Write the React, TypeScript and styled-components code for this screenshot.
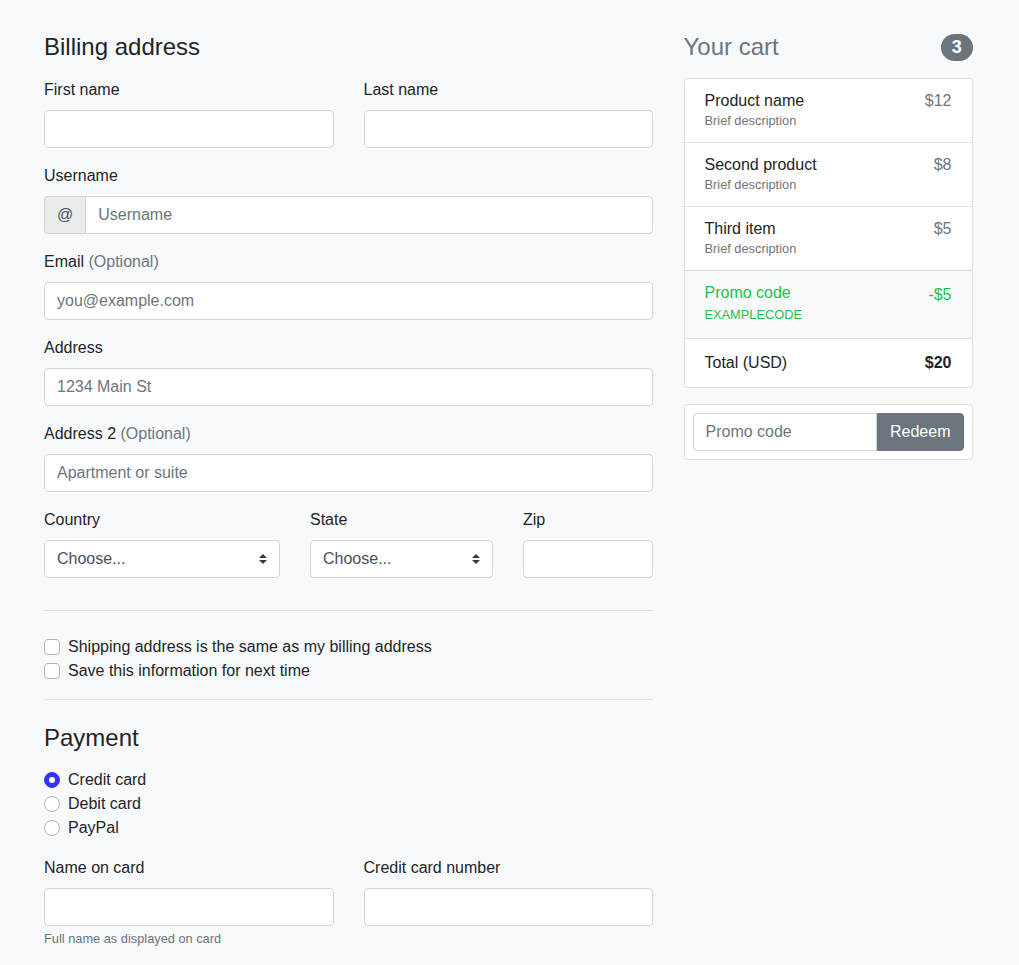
import styled, { createGlobalStyle } from 'styled-components';

const GlobalStyle = createGlobalStyle`
  * { box-sizing: border-box; }
  body {
    margin: 0;
    background: #f8f9fa;
    color: #212529;
    font-family: "Liberation Sans", Arial, sans-serif;
    font-size: 16px;
    line-height: 1.5;
  }
`;

const Container = styled.div`
  padding: 33px 0 40px 44px;
  display: flex;
  gap: 30.5px;
`;

const Main = styled.div`
  flex: 0 0 609px;
`;

const Side = styled.div`
  flex: 0 0 289px;
`;

const H4 = styled.h4<{ $muted?: boolean }>`
  margin: 0 0 16px;
  font-size: 24px;
  font-weight: 500;
  line-height: 1.2;
  color: ${(p) => (p.$muted ? '#6c757d' : '#212529')};
`;

const CartHead = styled(H4)`
  display: flex;
  justify-content: space-between;
  align-items: center;
`;

const Badge = styled.span`
  display: inline-block;
  background: #6c757d;
  color: #fff;
  font-size: 18px;
  font-weight: 700;
  line-height: 1;
  padding: 4.5px 10.8px;
  border-radius: 10rem;
`;

const Row = styled.div<{ $cols: string }>`
  display: grid;
  grid-template-columns: ${(p) => p.$cols};
  column-gap: 30px;
`;

const Field = styled.div`
  margin-bottom: 16px;
`;

const Label = styled.label`
  display: block;
  margin-bottom: 8px;
`;

const Muted = styled.span`
  color: #6c757d;
`;

const Input = styled.input`
  display: block;
  width: 100%;
  height: 38px;
  padding: 6px 12px;
  font: inherit;
  color: #495057;
  background: #fff;
  border: 1px solid #ced4da;
  border-radius: 4px;
  outline: none;
  &::placeholder {
    color: #6c757d;
  }
`;

const Group = styled.div`
  display: flex;
  width: 100%;
`;

const GroupText = styled.span`
  display: flex;
  align-items: center;
  padding: 6px 12px;
  background: #e9ecef;
  color: #495057;
  border: 1px solid #ced4da;
  border-right: 0;
  border-radius: 4px 0 0 4px;
`;

const GroupInput = styled(Input)`
  flex: 1;
  min-width: 0;
  border-radius: 0 4px 4px 0;
`;

const PromoInput = styled(Input)`
  flex: 1;
  min-width: 0;
  border-radius: 4px 0 0 4px;
`;

const Select = styled.select`
  display: block;
  width: 100%;
  height: 38px;
  padding: 6px 28px 6px 12px;
  font: inherit;
  color: #495057;
  background: #fff
    url("data:image/svg+xml,%3csvg xmlns='http://www.w3.org/2000/svg' width='4' height='5' viewBox='0 0 4 5'%3e%3cpath fill='%23343a40' d='M2 0L0 2h4zm0 5L0 3h4z'/%3e%3c/svg%3e")
    no-repeat right 12px center / 8px 10px;
  border: 1px solid #ced4da;
  border-radius: 4px;
  appearance: none;
  outline: none;
`;

const Rule = styled.hr<{ $after: number }>`
  margin: 16px 0 ${(p) => p.$after}px;
  border: 0;
  border-top: 1px solid rgba(0, 0, 0, 0.1);
`;

const Check = styled.label`
  display: flex;
  align-items: center;
  gap: 8px;
  min-height: 24px;
`;

const Box = styled.span<{ $round?: boolean; $on?: boolean }>`
  width: 16px;
  height: 16px;
  flex: 0 0 16px;
  border-radius: ${(p) => (p.$round ? '50%' : '4px')};
  border: 1px solid ${(p) => (p.$on ? '#3433f5' : '#adb5bd')};
  background: ${(p) => (p.$on ? '#3433f5' : '#fff')};
  display: flex;
  align-items: center;
  justify-content: center;
  &::after {
    content: '';
    display: ${(p) => (p.$on ? 'block' : 'none')};
    width: 6px;
    height: 6px;
    border-radius: 50%;
    background: #fff;
  }
`;

const PaymentHead = styled(H4)`
  margin-bottom: 15px;
`;

const Radios = styled.div`
  margin: 15px 0 16px;
`;

const Help = styled.small`
  display: block;
  margin-top: 3px;
  font-size: 12.8px;
  color: #6c757d;
`;

const List = styled.ul`
  margin: 0 0 16px;
  padding: 0;
  list-style: none;
  background: #fff;
  border: 1px solid rgba(0, 0, 0, 0.125);
  border-radius: 4px;
`;

const Item = styled.li<{ $condensed?: boolean; $light?: boolean; $green?: boolean }>`
  display: flex;
  justify-content: space-between;
  padding: 12px 20px;
  line-height: ${(p) => (p.$condensed ? 1.25 : 1.5)};
  background: ${(p) => (p.$light ? '#f8f9fa' : 'transparent')};
  color: ${(p) => (p.$green ? '#1cc24c' : 'inherit')};
  & + & {
    border-top: 1px solid rgba(0, 0, 0, 0.125);
  }
`;

const ItemTitle = styled.h6`
  margin: 0;
  font-size: 16px;
  font-weight: 500;
  line-height: 19px;
`;

const ItemSmall = styled.small<{ $muted?: boolean }>`
  font-size: 12.8px;
  color: ${(p) => (p.$muted ? '#6c757d' : 'inherit')};
`;

const Price = styled.span<{ $muted?: boolean }>`
  color: ${(p) => (p.$muted ? '#6c757d' : 'inherit')};
`;

const Card = styled.div`
  padding: 8px;
  background: #fff;
  border: 1px solid rgba(0, 0, 0, 0.125);
  border-radius: 4px;
`;

const Button = styled.button`
  padding: 6px 12px;
  font: inherit;
  color: #fff;
  background: #6c757d;
  border: 1px solid #6c757d;
  border-radius: 0 4px 4px 0;
`;

const products = [
  { name: 'Product name', price: '$12' },
  { name: 'Second product', price: '$8' },
  { name: 'Third item', price: '$5' },
];

export default function App() {
  return (
    <>
      <GlobalStyle />
      <Container>
        <Main>
          <H4>Billing address</H4>
          <Row $cols="1fr 1fr">
            <Field>
              <Label>First name</Label>
              <Input />
            </Field>
            <Field>
              <Label>Last name</Label>
              <Input />
            </Field>
          </Row>
          <Field>
            <Label>Username</Label>
            <Group>
              <GroupText>@</GroupText>
              <GroupInput placeholder="Username" />
            </Group>
          </Field>
          <Field>
            <Label>
              Email <Muted>(Optional)</Muted>
            </Label>
            <Input placeholder="you@example.com" />
          </Field>
          <Field>
            <Label>Address</Label>
            <Input placeholder="1234 Main St" />
          </Field>
          <Field>
            <Label>
              Address 2 <Muted>(Optional)</Muted>
            </Label>
            <Input placeholder="Apartment or suite" />
          </Field>
          <Row $cols="236px 183px 1fr">
            <Field>
              <Label>Country</Label>
              <Select defaultValue="">
                <option value="">Choose...</option>
              </Select>
            </Field>
            <Field>
              <Label>State</Label>
              <Select defaultValue="">
                <option value="">Choose...</option>
              </Select>
            </Field>
            <Field>
              <Label>Zip</Label>
              <Input />
            </Field>
          </Row>
          <Rule $after={24} />
          <Check>
            <Box />
            Shipping address is the same as my billing address
          </Check>
          <Check>
            <Box />
            Save this information for next time
          </Check>
          <Rule $after={24} />
          <PaymentHead>Payment</PaymentHead>
          <Radios>
            <Check>
              <Box $round $on />
              Credit card
            </Check>
            <Check>
              <Box $round />
              Debit card
            </Check>
            <Check>
              <Box $round />
              PayPal
            </Check>
          </Radios>
          <Row $cols="1fr 1fr">
            <Field>
              <Label>Name on card</Label>
              <Input />
              <Help>Full name as displayed on card</Help>
            </Field>
            <Field>
              <Label>Credit card number</Label>
              <Input />
            </Field>
          </Row>
        </Main>
        <Side>
          <CartHead $muted>
            Your cart
            <Badge>3</Badge>
          </CartHead>
          <List>
            {products.map((p) => (
              <Item key={p.name} $condensed>
                <div>
                  <ItemTitle>{p.name}</ItemTitle>
                  <ItemSmall $muted>Brief description</ItemSmall>
                </div>
                <Price $muted>{p.price}</Price>
              </Item>
            ))}
            <Item $light $green>
              <div>
                <ItemTitle>Promo code</ItemTitle>
                <ItemSmall>EXAMPLECODE</ItemSmall>
              </div>
              <Price>-$5</Price>
            </Item>
            <Item>
              <span>Total (USD)</span>
              <strong>$20</strong>
            </Item>
          </List>
          <Card>
            <Group>
              <PromoInput placeholder="Promo code" />
              <Button>Redeem</Button>
            </Group>
          </Card>
        </Side>
      </Container>
    </>
  );
}
